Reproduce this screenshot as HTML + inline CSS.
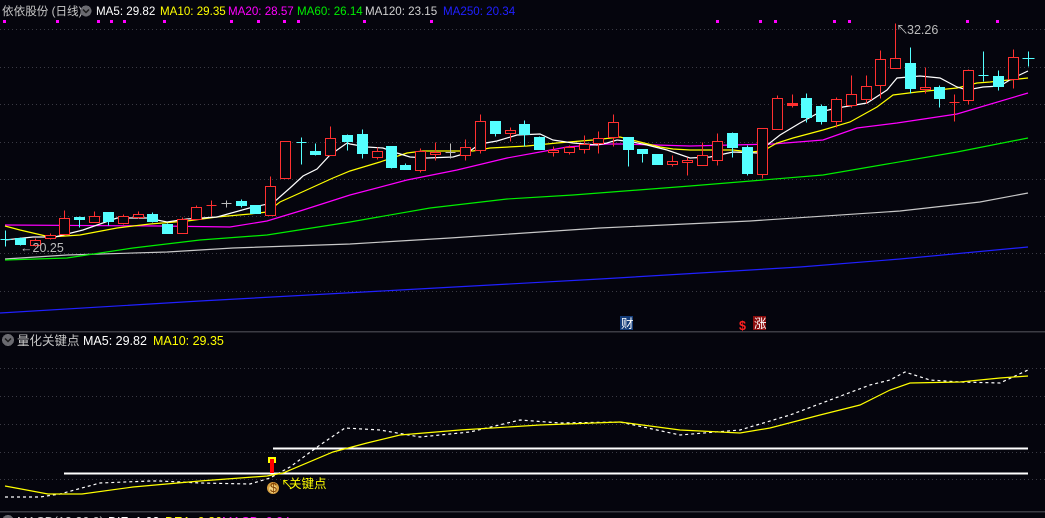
<!DOCTYPE html>
<html><head><meta charset="utf-8"><style>
html,body{margin:0;padding:0;background:#05050d;width:1045px;height:518px;overflow:hidden}
svg{display:block}
text{font-family:"Liberation Sans","Noto Sans CJK SC",sans-serif;font-size:12.5px}
.h{font-size:11.6px}
</style></head><body>
<svg width="1045" height="518" viewBox="0 0 1045 518" xmlns="http://www.w3.org/2000/svg" shape-rendering="crispEdges">
<rect width="1045" height="518" fill="#05050d"/>
<g stroke="#3a3a44" stroke-dasharray="1 3">
<line x1="0" y1="29.5" x2="1045" y2="29.5"/><line x1="0" y1="67.5" x2="1045" y2="67.5"/>
<line x1="0" y1="104.5" x2="1045" y2="104.5"/><line x1="0" y1="142.5" x2="1045" y2="142.5"/>
<line x1="0" y1="179.5" x2="1045" y2="179.5"/><line x1="0" y1="216.5" x2="1045" y2="216.5"/>
<line x1="0" y1="253.5" x2="1045" y2="253.5"/><line x1="0" y1="291.5" x2="1045" y2="291.5"/>
<line x1="0" y1="368.5" x2="1045" y2="368.5"/><line x1="0" y1="396.5" x2="1045" y2="396.5"/>
<line x1="0" y1="424.5" x2="1045" y2="424.5"/><line x1="0" y1="452.5" x2="1045" y2="452.5"/>
<line x1="0" y1="479.5" x2="1045" y2="479.5"/>
</g>
<line x1="0" y1="331.5" x2="1045" y2="331.5" stroke="#3c3c44" stroke-width="1.5"/>
<line x1="0" y1="511.5" x2="1045" y2="511.5" stroke="#3c3c44" stroke-width="1.5"/>
<g fill="#ff00ff">
<rect x="3" y="20" width="3" height="3"/><rect x="56" y="20" width="3" height="3"/><rect x="97" y="20" width="3" height="3"/><rect x="110" y="20" width="3" height="3"/><rect x="123" y="20" width="3" height="3"/><rect x="163" y="20" width="3" height="3"/><rect x="230" y="20" width="3" height="3"/><rect x="257" y="20" width="3" height="3"/><rect x="283" y="20" width="3" height="3"/><rect x="297" y="20" width="3" height="3"/><rect x="363" y="20" width="3" height="3"/><rect x="430" y="20" width="3" height="3"/><rect x="716" y="20" width="3" height="3"/><rect x="759" y="20" width="3" height="3"/><rect x="774" y="20" width="3" height="3"/><rect x="833" y="20" width="3" height="3"/><rect x="848" y="20" width="3" height="3"/><rect x="966" y="20" width="3" height="3"/><rect x="996" y="20" width="3" height="3"/>
</g>
<g fill="none" stroke-width="1.2" shape-rendering="auto">
<polyline stroke="#2020ff" points="0,313 200,301 400,290 600,279 800,267 900,259 1028,247"/>
<polyline stroke="#c8c8c8" points="5,259 67,255 167,252 233,248 350,244 450,238 600,228 750,221 900,211 980,202 1028,193"/>
<polyline stroke="#00ee00" points="5,260 67,258 133,248 200,240 267,235 350,222 430,208 507,199 573,195 690,186 823,175 957,152 1028,138"/>
<polyline stroke="#ff00ff" points="5,225 160,226 230,227 267,221 300,211 350,195 407,180 457,170 507,158 540,152 567,147 607,144 623,144 690,146 773,144 823,140 857,128 897,123 957,114 1028,93"/>
<polyline stroke="#ffff00" points="5,226 20,230 50,237 80,235 117,228 150,224 187,221 217,217 250,214 267,212 280,202 300,193 333,178 350,171 360,168 380,162 407,153 423,151 473,151 490,148 527,146 557,143 593,140 620,137 640,142 660,147 673,149 690,150 733,150 750,152 763,151 777,143 793,138 823,130 850,122 877,107 893,95 917,92 957,88 977,83 990,82 1028,78"/>
<polyline stroke="#ffffff" points="5,240 33,237 55,237 83,230 117,218 147,218 167,222 187,219 217,217 253,207 273,203 290,188 303,176 317,169 330,155 347,143 350,144 367,147 383,148 397,153 410,157 427,158 453,157 467,153 480,144 497,141 517,135 540,134 553,140 573,143 597,145 607,143 617,140 633,142 647,145 667,150 690,158 710,157 733,152 757,153 780,135 800,123 820,112 837,108 867,103 887,90 897,78 920,76 940,78 957,87 967,90 983,87 1000,86 1013,78 1028,71"/>
</g>
<g stroke-width="1" transform="translate(0.5,0.5)">
<g stroke="#54ffff"><line x1="5" y1="230" x2="5" y2="246"/><line x1="0" y1="239" x2="11" y2="239"/></g>
<g stroke="#54ffff" fill="#54ffff"><line x1="20" y1="237" x2="20" y2="245"/><rect x="15" y="238" width="10" height="6"/></g>
<g stroke="#ff3030" fill="#05050d"><line x1="35" y1="238" x2="35" y2="246"/><rect x="30" y="240" width="10" height="5"/></g>
<g stroke="#ff3030" fill="#05050d"><line x1="50" y1="233" x2="50" y2="239"/><rect x="45" y="235" width="10" height="3"/></g>
<g stroke="#ff3030" fill="#05050d"><line x1="64" y1="210" x2="64" y2="234"/><rect x="59" y="218" width="10" height="16"/></g>
<g stroke="#54ffff" fill="#54ffff"><line x1="79" y1="216" x2="79" y2="227"/><rect x="74" y="217" width="10" height="2"/></g>
<g stroke="#ff3030" fill="#05050d"><line x1="94" y1="211" x2="94" y2="222"/><rect x="89" y="216" width="10" height="6"/></g>
<g stroke="#54ffff" fill="#54ffff"><line x1="108" y1="212" x2="108" y2="225"/><rect x="103" y="212" width="10" height="9"/></g>
<g stroke="#ff3030" fill="#05050d"><line x1="123" y1="214" x2="123" y2="224"/><rect x="118" y="216" width="10" height="7"/></g>
<g stroke="#ff3030" fill="#05050d"><line x1="138" y1="211" x2="138" y2="218"/><rect x="133" y="214" width="10" height="3"/></g>
<g stroke="#54ffff" fill="#54ffff"><line x1="152" y1="212" x2="152" y2="222"/><rect x="147" y="214" width="10" height="7"/></g>
<g stroke="#54ffff" fill="#54ffff"><line x1="167" y1="223" x2="167" y2="233"/><rect x="162" y="224" width="10" height="9"/></g>
<g stroke="#ff3030" fill="#05050d"><line x1="182" y1="217" x2="182" y2="233"/><rect x="177" y="219" width="10" height="14"/></g>
<g stroke="#ff3030" fill="#05050d"><line x1="196" y1="205" x2="196" y2="219"/><rect x="191" y="207" width="10" height="12"/></g>
<g stroke="#ff3030"><line x1="211" y1="200" x2="211" y2="216"/><line x1="206" y1="205" x2="216" y2="205"/></g>
<g stroke="#bbbbbb"><line x1="226" y1="200" x2="226" y2="207"/><line x1="221" y1="203" x2="231" y2="203"/></g>
<g stroke="#54ffff" fill="#54ffff"><line x1="241" y1="199" x2="241" y2="207"/><rect x="236" y="201" width="10" height="4"/></g>
<g stroke="#54ffff" fill="#54ffff"><line x1="255" y1="205" x2="255" y2="213"/><rect x="250" y="205" width="10" height="8"/></g>
<g stroke="#ff3030" fill="#05050d"><line x1="270" y1="176" x2="270" y2="215"/><rect x="265" y="186" width="10" height="29"/></g>
<g stroke="#ff3030" fill="#05050d"><rect x="280" y="141" width="10" height="37"/></g>
<g stroke="#54ffff"><line x1="301" y1="137" x2="301" y2="164"/><line x1="296" y1="142" x2="306" y2="142"/></g>
<g stroke="#54ffff" fill="#54ffff"><line x1="315" y1="143" x2="315" y2="155"/><rect x="310" y="151" width="10" height="3"/></g>
<g stroke="#ff3030" fill="#05050d"><line x1="330" y1="126" x2="330" y2="155"/><rect x="325" y="138" width="10" height="17"/></g>
<g stroke="#54ffff" fill="#54ffff"><line x1="347" y1="134" x2="347" y2="150"/><rect x="342" y="135" width="10" height="6"/></g>
<g stroke="#54ffff" fill="#54ffff"><line x1="362" y1="129" x2="362" y2="158"/><rect x="357" y="134" width="10" height="19"/></g>
<g stroke="#ff3030" fill="#05050d"><line x1="377" y1="147" x2="377" y2="159"/><rect x="372" y="151" width="10" height="6"/></g>
<g stroke="#54ffff" fill="#54ffff"><line x1="391" y1="146" x2="391" y2="168"/><rect x="386" y="146" width="10" height="21"/></g>
<g stroke="#54ffff" fill="#54ffff"><line x1="405" y1="163" x2="405" y2="169"/><rect x="400" y="165" width="10" height="4"/></g>
<g stroke="#ff3030" fill="#05050d"><line x1="420" y1="148" x2="420" y2="172"/><rect x="415" y="151" width="10" height="19"/></g>
<g stroke="#ff3030" fill="#05050d"><line x1="435" y1="142" x2="435" y2="160"/><rect x="430" y="152" width="10" height="2"/></g>
<g stroke="#bbbbbb"><line x1="450" y1="143" x2="450" y2="158"/><line x1="445" y1="152" x2="455" y2="152"/></g>
<g stroke="#ff3030" fill="#05050d"><line x1="465" y1="139" x2="465" y2="160"/><rect x="460" y="147" width="10" height="8"/></g>
<g stroke="#ff3030" fill="#05050d"><line x1="480" y1="114" x2="480" y2="153"/><rect x="475" y="121" width="10" height="29"/></g>
<g stroke="#54ffff" fill="#54ffff"><line x1="495" y1="121" x2="495" y2="136"/><rect x="490" y="121" width="10" height="12"/></g>
<g stroke="#ff3030" fill="#05050d"><line x1="510" y1="127" x2="510" y2="141"/><rect x="505" y="130" width="10" height="3"/></g>
<g stroke="#54ffff" fill="#54ffff"><line x1="524" y1="120" x2="524" y2="146"/><rect x="519" y="124" width="10" height="10"/></g>
<g stroke="#54ffff" fill="#54ffff"><line x1="539" y1="136" x2="539" y2="149"/><rect x="534" y="137" width="10" height="12"/></g>
<g stroke="#ff3030" fill="#05050d"><line x1="553" y1="146" x2="553" y2="156"/><rect x="548" y="150" width="10" height="2"/></g>
<g stroke="#ff3030" fill="#05050d"><line x1="569" y1="145" x2="569" y2="154"/><rect x="564" y="147" width="10" height="5"/></g>
<g stroke="#ff3030" fill="#05050d"><line x1="584" y1="135" x2="584" y2="153"/><rect x="579" y="144" width="10" height="5"/></g>
<g stroke="#ff3030" fill="#05050d"><line x1="598" y1="131" x2="598" y2="153"/><rect x="593" y="138" width="10" height="5"/></g>
<g stroke="#ff3030" fill="#05050d"><line x1="613" y1="114" x2="613" y2="146"/><rect x="608" y="122" width="10" height="15"/></g>
<g stroke="#54ffff" fill="#54ffff"><line x1="628" y1="137" x2="628" y2="166"/><rect x="623" y="137" width="10" height="12"/></g>
<g stroke="#54ffff" fill="#54ffff"><line x1="642" y1="149" x2="642" y2="162"/><rect x="637" y="149" width="10" height="4"/></g>
<g stroke="#54ffff" fill="#54ffff"><rect x="652" y="154" width="10" height="10"/></g>
<g stroke="#ff3030" fill="#05050d"><line x1="672" y1="155" x2="672" y2="166"/><rect x="667" y="161" width="10" height="3"/></g>
<g stroke="#ff3030" fill="#05050d"><line x1="687" y1="157" x2="687" y2="175"/><rect x="682" y="160" width="10" height="2"/></g>
<g stroke="#ff3030" fill="#05050d"><line x1="702" y1="142" x2="702" y2="165"/><rect x="697" y="155" width="10" height="10"/></g>
<g stroke="#ff3030" fill="#05050d"><line x1="717" y1="133" x2="717" y2="165"/><rect x="712" y="141" width="10" height="19"/></g>
<g stroke="#54ffff" fill="#54ffff"><line x1="732" y1="132" x2="732" y2="157"/><rect x="727" y="133" width="10" height="14"/></g>
<g stroke="#54ffff" fill="#54ffff"><line x1="747" y1="145" x2="747" y2="175"/><rect x="742" y="147" width="10" height="26"/></g>
<g stroke="#ff3030" fill="#05050d"><line x1="762" y1="128" x2="762" y2="178"/><rect x="757" y="128" width="10" height="46"/></g>
<g stroke="#ff3030" fill="#05050d"><line x1="777" y1="95" x2="777" y2="129"/><rect x="772" y="98" width="10" height="31"/></g>
<g stroke="#ff3030" fill="#ff3030"><line x1="792" y1="94" x2="792" y2="107"/><rect x="787" y="103" width="10" height="2"/></g>
<g stroke="#54ffff" fill="#54ffff"><line x1="806" y1="93" x2="806" y2="122"/><rect x="801" y="98" width="10" height="19"/></g>
<g stroke="#54ffff" fill="#54ffff"><line x1="821" y1="104" x2="821" y2="124"/><rect x="816" y="106" width="10" height="15"/></g>
<g stroke="#ff3030" fill="#05050d"><line x1="836" y1="97" x2="836" y2="127"/><rect x="831" y="99" width="10" height="22"/></g>
<g stroke="#ff3030" fill="#05050d"><line x1="851" y1="75" x2="851" y2="107"/><rect x="846" y="94" width="10" height="11"/></g>
<g stroke="#ff3030" fill="#05050d"><line x1="866" y1="75" x2="866" y2="103"/><rect x="861" y="86" width="10" height="13"/></g>
<g stroke="#ff3030" fill="#05050d"><line x1="880" y1="50" x2="880" y2="98"/><rect x="875" y="59" width="10" height="26"/></g>
<g stroke="#ff3030" fill="#05050d"><line x1="895" y1="23" x2="895" y2="68"/><rect x="890" y="58" width="10" height="10"/></g>
<g stroke="#54ffff" fill="#54ffff"><line x1="910" y1="47" x2="910" y2="93"/><rect x="905" y="63" width="10" height="25"/></g>
<g stroke="#ff3030" fill="#05050d"><line x1="925" y1="67" x2="925" y2="93"/><rect x="920" y="87" width="10" height="2"/></g>
<g stroke="#54ffff" fill="#54ffff"><line x1="939" y1="85" x2="939" y2="107"/><rect x="934" y="87" width="10" height="11"/></g>
<g stroke="#ff3030"><line x1="954" y1="94" x2="954" y2="121"/><line x1="949" y1="102" x2="959" y2="102"/></g>
<g stroke="#ff3030" fill="#05050d"><line x1="968" y1="69" x2="968" y2="104"/><rect x="963" y="70" width="10" height="30"/></g>
<g stroke="#54ffff"><line x1="983" y1="51" x2="983" y2="81"/><line x1="978" y1="75" x2="988" y2="75"/></g>
<g stroke="#54ffff" fill="#54ffff"><line x1="998" y1="70" x2="998" y2="90"/><rect x="993" y="76" width="10" height="10"/></g>
<g stroke="#ff3030" fill="#05050d"><line x1="1013" y1="49" x2="1013" y2="88"/><rect x="1008" y="57" width="10" height="22"/></g>
<g stroke="#54ffff"><line x1="1028" y1="51" x2="1028" y2="66"/><line x1="1022" y1="58" x2="1034" y2="58"/></g>
</g>
<text x="896" y="34" fill="#bbbbbb" font-size="12">↖</text>
<text x="907" y="34" fill="#bbbbbb">32.26</text>
<text x="20" y="252" fill="#bbbbbb">←20.25</text>
<text x="2" y="15" fill="#c8c8c8" class="h">依依股份 (日线)</text>
<circle cx="86" cy="11" r="5.5" fill="#6a6a70"/>
<path d="M83 9.5 L86 12.5 L89 9.5" stroke="#1a1a1a" stroke-width="1.5" fill="none" shape-rendering="auto"/>
<text x="96" y="15" fill="#ffffff" class="h">MA5: 29.82</text>
<text x="160" y="15" fill="#ffff00" class="h">MA10: 29.35</text>
<text x="228" y="15" fill="#ff00ff" class="h">MA20: 28.57</text>
<text x="297" y="15" fill="#00ee00" class="h">MA60: 26.14</text>
<text x="365" y="15" fill="#d0d0d0" class="h">MA120: 23.15</text>
<text x="443" y="15" fill="#2020ff" class="h">MA250: 20.34</text>
<rect x="620" y="316" width="13" height="14" fill="#143c78"/>
<text x="621" y="328" fill="#ffffff" font-size="11">财</text>
<text x="739" y="330" fill="#ff2020" font-size="11" font-weight="bold">$</text>
<rect x="753" y="316" width="13" height="14" fill="#8a0c0c"/>
<text x="754" y="328" fill="#ffffff" font-size="11">涨</text>
<circle cx="8" cy="340" r="6" fill="#6a6a70"/>
<path d="M5 338.5 L8 341.5 L11 338.5" stroke="#1a1a1a" stroke-width="1.5" fill="none" shape-rendering="auto"/>
<text x="17" y="345" fill="#c8c8c8">量化关键点</text>
<text x="83" y="345" fill="#ffffff">MA5: 29.82</text>
<text x="153" y="345" fill="#ffff00">MA10: 29.35</text>
<line x1="273" y1="448.5" x2="1028" y2="448.5" stroke="#ffffff" stroke-width="2"/>
<line x1="64" y1="473.5" x2="1028" y2="473.5" stroke="#ffffff" stroke-width="2"/>
<g fill="none" stroke-width="1.2" shape-rendering="auto">
<polyline stroke="#ffffff" stroke-dasharray="3 3" points="5,497 40,497 60,494 100,483 150,481 160,481 200,483 250,484 270,478 290,467 320,445 345,428 380,430 420,437 470,432 520,420 560,423 620,422 680,435 740,430 790,415 830,400 870,385 890,380 905,372 930,380 960,382 1000,383 1028,370"/>
<polyline stroke="#ffff00" points="5,486 48,494 82,494 133,487 200,481 267,476 283,473 333,452 367,443 400,435 460,430 540,425 620,422 680,430 740,433 770,428 820,415 860,405 890,390 910,383 960,382 1000,378 1028,376"/>
</g>
<rect x="270" y="457" width="4" height="16" fill="#ff0000"/>
<rect x="268" y="457" width="8" height="2" fill="#ffff00"/>
<rect x="268" y="457" width="2" height="6" fill="#ffff00"/>
<rect x="274" y="457" width="2" height="6" fill="#ffff00"/>
<circle cx="273" cy="488" r="6" fill="#d8a040" shape-rendering="auto"/>
<circle cx="273" cy="489" r="4" fill="#f0d080" shape-rendering="auto"/>
<text x="270" y="492" fill="#804000" font-size="8">$</text>
<text x="281" y="489" fill="#ffff00" font-size="11">↖</text>
<text x="289" y="488" fill="#ffff00">关键点</text>
<circle cx="8" cy="521" r="6" fill="#6a6a70"/>
<text x="17" y="526" fill="#c8c8c8">MACD(12,26,9)</text>
<text x="108" y="526" fill="#ffffff">DIF: 1.02</text>
<text x="165" y="526" fill="#ffff00">DEA: 0.86</text>
<text x="222" y="526" fill="#ff00ff">MACD: 0.34</text>
</svg>
</body></html>
